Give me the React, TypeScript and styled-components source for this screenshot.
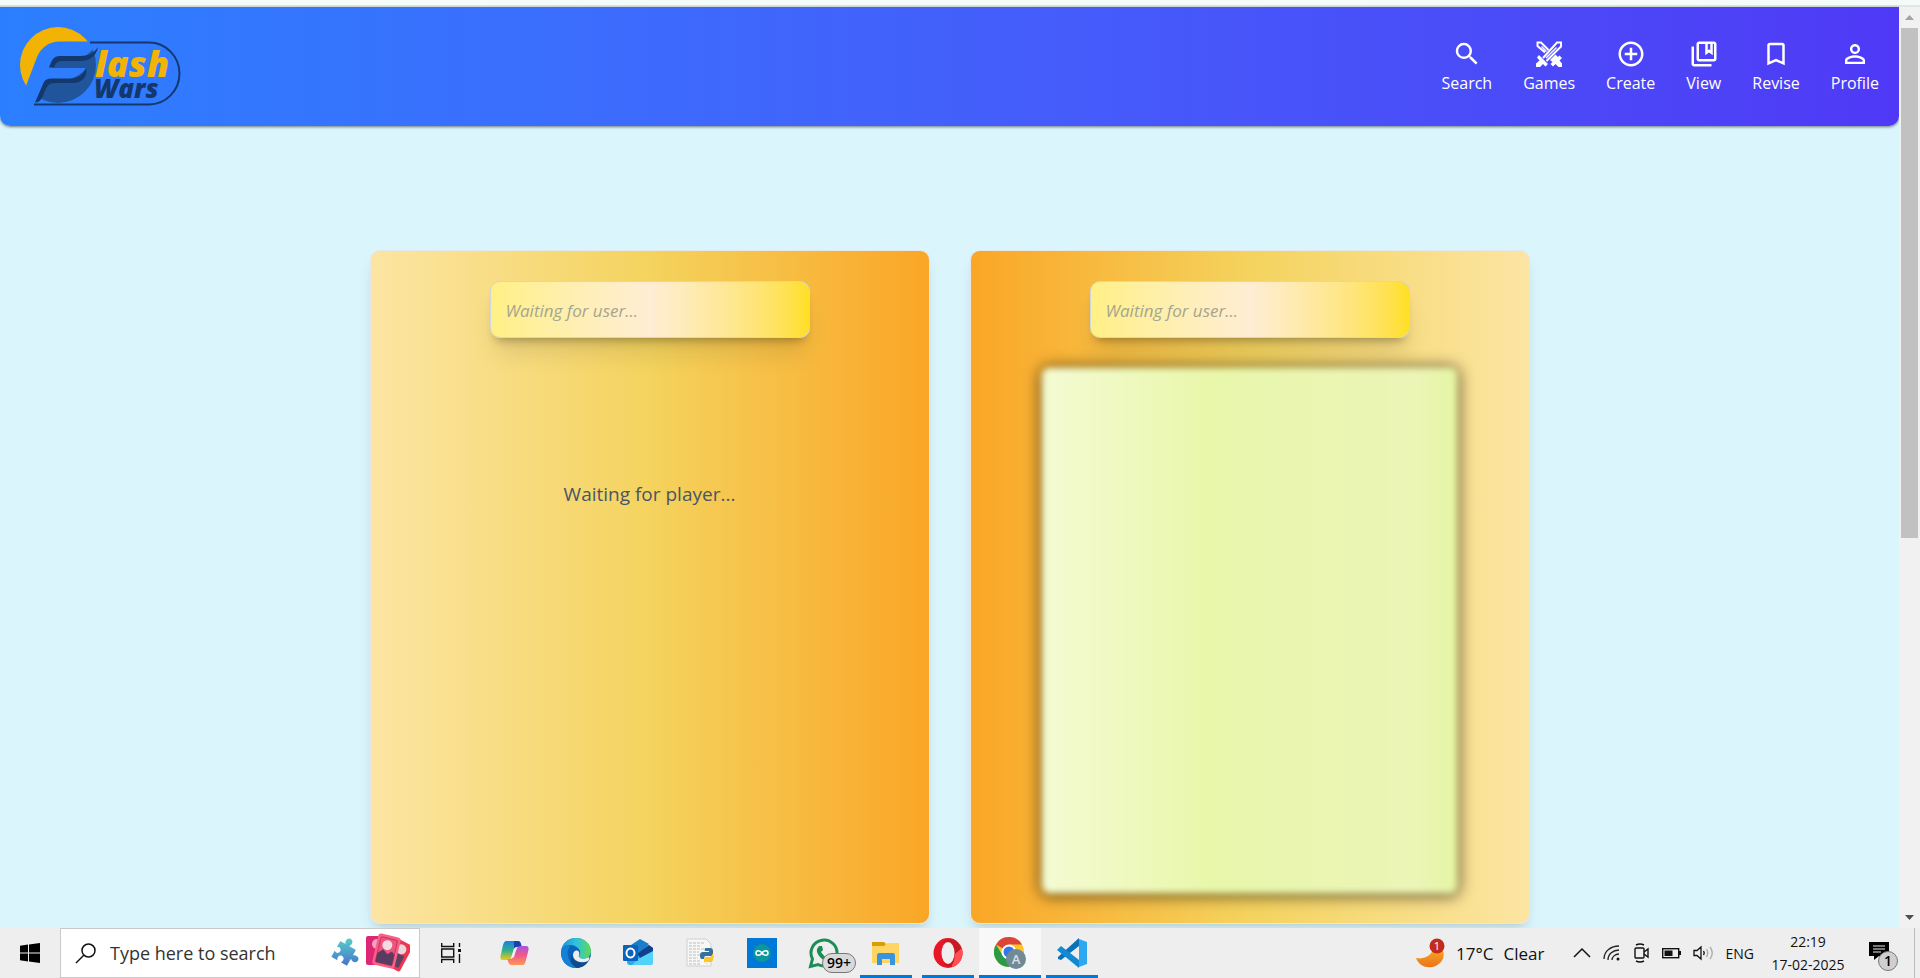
import React from 'react';
import styled, { createGlobalStyle, css } from 'styled-components';
import {
  MdSearch,
  MdAddCircleOutline,
  MdOutlineCollectionsBookmark,
  MdBookmarkBorder,
  MdPersonOutline,
} from 'react-icons/md';

const GlobalStyle = createGlobalStyle`
  *, *::before, *::after { box-sizing: border-box; }
  body {
    margin: 0;
    font-family: "Segoe UI", "Open Sans", "Noto Sans", sans-serif;
    color: #111;
  }
  svg { display: block; flex: none; }
  button { font: inherit; color: inherit; border: 0; padding: 0; background: none; }
`;

const Screen = styled.div`
  display: flex;
  flex-direction: column;
  min-height: 100vh;
`;

const BrowserEdge = styled.div`
  height: 7px;
  background: #f5fbf9;
  border-bottom: 2px solid #dbe8e4;
`;

const Viewport = styled.div`
  flex: 1;
  display: flex;
`;

const Page = styled.div`
  flex: 1;
  min-width: 0;
  background: #dbf5fc;
`;

const Header = styled.header`
  display: flex;
  align-items: center;
  justify-content: space-between;
  height: 119px;
  padding: 0 20px 0 18px;
  border-radius: 0 0 10px 10px;
  background: linear-gradient(to right in oklab, #2b7fff, #4f39f6);
  box-shadow: 0 1px 3px rgba(0, 0, 0, 0.5);
`;

const Nav = styled.nav`
  display: flex;
  gap: 31px;
`;

const NavLink = styled.a`
  display: flex;
  flex-direction: column;
  align-items: center;
  padding-top: 2px;
  color: #fff;
  font-size: 16px;
  line-height: 28px;
  text-decoration: none;
`;

const Arena = styled.main`
  display: flex;
  justify-content: center;
  gap: 40px;
  padding: 124px 20px 4px;
`;

const PlayerCard = styled.section<{ $mirrored?: boolean }>`
  display: flex;
  flex-direction: column;
  align-items: center;
  width: 560px;
  height: 674px;
  padding-top: 30px;
  border: 1px solid #e5e7eb;
  border-radius: 10px;
  background: linear-gradient(
    ${(p) => (p.$mirrored ? 'to left' : 'to right')},
    #fce5a3,
    #f4d35e 50%,
    #faa626
  );
  box-shadow: 0 10px 15px -3px rgba(0, 0, 0, 0.1), 0 4px 6px -4px rgba(0, 0, 0, 0.1);
`;

const NameField = styled.input`
  width: 320px;
  height: 57px;
  padding: 2px 15px 0;
  border: 1px solid #d1d5dc;
  border-radius: 10px;
  background: linear-gradient(to right in oklab, #fff085, #ffedd4 50%, #ffdf20);
  box-shadow: 0 20px 25px -5px rgba(0, 0, 0, 0.1), 0 8px 10px -6px rgba(0, 0, 0, 0.3);
  font: italic 17px "Segoe UI", "Open Sans", "Noto Sans", sans-serif;
  &::placeholder { color: #a5a58f; opacity: 1; }
`;

const WaitingText = styled.p`
  margin: 142px 0 0;
  font-size: 19px;
  line-height: 28px;
  color: #4a5565;
`;

const CardBack = styled.div`
  width: 415px;
  height: 525px;
  margin-top: 30px;
  border-radius: 8px;
  background: linear-gradient(to right, #f4fbd3, #e9f7ab 40%, #ebf5b6 90%, #e5f5a4);
  box-shadow: 0 1px 14px 3px rgba(0, 0, 0, 0.55);
  filter: blur(3px);
`;

const ScrollTrack = styled.div`
  display: flex;
  flex-direction: column;
  width: 21px;
  padding: 0 2px;
  background: #f1f1f1;
`;

const ScrollButton = styled.button`
  display: flex;
  align-items: center;
  justify-content: center;
  height: 21px;
`;

const ScrollLane = styled.div`
  flex: 1;
`;

const ScrollThumb = styled.div`
  height: 58%;
  background: #c1c1c1;
`;

const Taskbar = styled.footer`
  display: flex;
  height: 50px;
  background: #eeeeee;
`;

const AppButtons = styled.nav`
  display: flex;
  padding-left: 1px;
`;

const TaskButton = styled.button<{ $open?: boolean; $active?: boolean; $narrow?: boolean }>`
  display: flex;
  align-items: center;
  justify-content: center;
  width: ${(p) => (p.$narrow ? '60px' : '62px')};
  position: relative;
  ${(p) => p.$active && css`background: #f8f8f8;`}
  ${(p) => p.$open && css`
    &::after {
      content: '';
      position: absolute;
      bottom: 0;
      left: ${p.$active ? '0' : '5px'};
      right: ${p.$active ? '0' : '5px'};
      height: 3px;
      background: #0078d7;
    }
  `}
`;

const SearchBox = styled.label`
  display: flex;
  align-items: center;
  width: 360px;
  padding: 0 9px 0 14px;
  background: #fff;
  border: 1px solid #c9c9c9;
`;

const SearchInput = styled.input`
  flex: 1;
  min-width: 0;
  padding: 0 0 0 14px;
  border: 0;
  background: none;
  font: 18px "Segoe UI", "Open Sans", "Noto Sans", sans-serif;
  &::placeholder { color: #333; opacity: 1; }
`;

const SearchArt = styled.span`
  display: flex;
  align-items: center;
  gap: 4px;
`;

const CountBadge = styled.span`
  position: absolute;
  right: -1px;
  bottom: 5px;
  padding: 0 4px;
  border: 1px solid #777;
  border-radius: 10px;
  background: #d9d9d9;
  font-size: 14px;
  font-weight: 600;
  line-height: 18px;
  color: #000;
`;

const Tray = styled.div`
  display: flex;
  align-items: center;
  margin-left: auto;
`;

const Weather = styled.button`
  display: flex;
  align-items: center;
  gap: 10px;
  margin-right: 28px;
  font-size: 17px;
`;

const TrayIcons = styled.div`
  display: flex;
  align-items: center;
  gap: 12px;
  font-size: 14px;
`;

const Clock = styled.button`
  width: 78px;
  margin: 0 22px 0 15px;
  font-size: 14px;
  line-height: 23px;
`;

const Notifications = styled.button`
  margin-right: 14px;
`;

const ShowDesktop = styled.div`
  align-self: stretch;
  width: 6px;
  border-left: 1px solid #bcbcbc;
`;

const SwordsIcon = ({ size }: { size: number }) => (
  <svg width={size} height={size} viewBox="0 0 30 30">
    <g fill="none" stroke="#fff" strokeWidth="2">
      <path d="M9 19L23 3.500H27V7.500L12.500 22" />
      <path d="M12 19L22.500 8.500" strokeWidth="1.500" />
      <path d="M11 13.500L3.500 7V3.500H7L14.500 11" />
      <path d="M7.500 7.500L12.500 12.500" strokeWidth="1.500" />
    </g>
    <path d="M5 16L14 25L11.500 27.500L9 25L6 28H2V24.500L5.500 21.500L3 18.500Z" fill="#fff" />
    <path d="M18 19L21.500 15.500L24 18L25.500 16.500L28 19L25.500 21.500L28 24.500V28H24.500L21.500 25L19 27.500L16.500 25L18.500 23L16 21Z" fill="#fff" />
  </svg>
);

const navItems = [
  { label: 'Search', Icon: MdSearch },
  { label: 'Games', Icon: SwordsIcon },
  { label: 'Create', Icon: MdAddCircleOutline },
  { label: 'View', Icon: MdOutlineCollectionsBookmark },
  { label: 'Revise', Icon: MdBookmarkBorder },
  { label: 'Profile', Icon: MdPersonOutline },
];

const Logo = () => (
  <svg width="164" height="88" viewBox="18 23 164 88" role="img" aria-label="Flash Wars">
    <defs>
      <clipPath id="disc"><circle cx="58" cy="65" r="38" /></clipPath>
    </defs>
    <path d="M26 86H10V20H92L88 41.500H60C48 41.500 41 48 37 57Z" fill="#f2b305" clipPath="url(#disc)" />
    <path d="M90 42.500H149A30.500 31 0 0 1 149 104.500H34" fill="none" stroke="#14386d" strokeWidth="2" />
    <path d="M99 44V106H34L46 83C60 80 76 82 86 68H52L58 59H82Z" fill="#20559b" clipPath="url(#disc)" />
    <path d="M49 67.500C52 60 53 56 60 56H80C89 56 94 53 98 47C96 57 89 61 80 61H63C57 61 56 63 54 67.500Z" fill="#14386d" />
    <path d="M35 102.500L43 84C45 79 48 78.500 52 78.500H70C79 78 84 74 86 68C88 77 81 83 73 83H54C49 83 47 86 45 91L42 98C40 101 38 102.500 35 102.500Z" fill="#14386d" />
    <text x="95" y="77" fontFamily="Open Sans" fontStyle="italic" fontWeight="800" fontSize="36" fill="#f2b305">lash</text>
    <text x="94" y="98" fontFamily="Open Sans" fontStyle="italic" fontWeight="800" fontSize="26" fill="#14386d">Wars</text>
  </svg>
);

const WindowsIcon = () => (
  <svg width="20" height="20" viewBox="0 0 20 20">
    <path d="M0 2.800L8 1.600V9.500H0ZM9 1.500L20 0V9.500H9ZM0 10.500H8V18.500L0 17.300ZM9 10.500H20V20L9 18.600Z" fill="#000" />
  </svg>
);

const LensIcon = () => (
  <svg width="21" height="21" viewBox="0 0 21 21" fill="none" stroke="#111" strokeWidth="1.500">
    <circle cx="13.500" cy="7.500" r="6.500" />
    <path d="M9 12L1 20" />
  </svg>
);

const PuzzleIcon = () => (
  <svg width="32" height="32" viewBox="0 0 32 32">
    <defs>
      <linearGradient id="puzzle" gradientUnits="userSpaceOnUse" x1="8" y1="2" x2="24" y2="28">
        <stop offset="0" stopColor="#5ad3c6" />
        <stop offset="1" stopColor="#4270cf" />
      </linearGradient>
    </defs>
    <path
      transform="rotate(30 16 16)"
      d="M6 8H12C10 6 10 1 14 1S18 6 16 8H24V14C26 12 31 12 31 16S26 20 24 18V26H17C19 24 18 20 15 20S11 24 13 26H6V19C8 21 11 20 11 17S8 13 6 15Z"
      fill="url(#puzzle)"
    />
  </svg>
);

const PhotoCardsIcon = () => (
  <svg width="45" height="40" viewBox="0 0 45 40">
    <rect x="1" y="3" width="20" height="29" rx="2" fill="#dd2676" />
    <circle cx="12" cy="11" r="5" fill="#f5a3c0" />
    <g transform="rotate(28 34 23)">
      <rect x="24" y="8" width="18" height="29" rx="2" fill="#f0354f" />
      <rect x="27" y="21" width="12" height="13" fill="#5b4163" />
      <circle cx="33" cy="16" r="5" fill="#ead5dc" />
    </g>
    <g transform="rotate(13 21 18)">
      <rect x="10" y="2" width="23" height="32" rx="3" fill="#fb5f84" />
      <rect x="13" y="5" width="17" height="26" rx="2" fill="#ee547c" stroke="#c93263" />
      <path d="M13 22L18 17L23 21L27 17L30 20V31H13Z" fill="#5a3c63" />
      <circle cx="21" cy="12" r="5" fill="#f2dbe1" />
    </g>
  </svg>
);

const TaskViewIcon = () => (
  <svg width="20" height="20" viewBox="0 0 20 20" fill="none" stroke="#111" strokeWidth="1.400">
    <path d="M.7 0V3.500H12.700V0M.7 20V16.500H12.700V20M.7 6H12.700V14H.7ZM18.500 0V4M18.500 11V20" />
    <path d="M17 6H20V9H17Z" fill="#111" stroke="none" />
  </svg>
);

const CopilotIcon = () => (
  <svg width="29" height="26" viewBox="0 0 29 26">
    <defs>
      <linearGradient id="cpLeft" x1="0" y1="0" x2="0" y2="1">
        <stop offset="0" stopColor="#1b80e0" />
        <stop offset=".5" stopColor="#32b08c" />
        <stop offset="1" stopColor="#f2ca17" />
      </linearGradient>
      <linearGradient id="cpRight" x1="0" y1="0" x2="0" y2="1">
        <stop offset="0" stopColor="#a953df" />
        <stop offset=".5" stopColor="#f05a8b" />
        <stop offset="1" stopColor="#ff984f" />
      </linearGradient>
    </defs>
    <path d="M6 1H18C21 1 20 4 22 7H17C14 7 14 9 13 12L11 18C10 20 8 20 6 20H3C0 20 0 17 1 14L3 5C4 2 5 1 6 1Z" fill="url(#cpLeft)" />
    <path d="M14 1H18C21 1 21 5 22 7H17C15 7 14 8 14 9Z" fill="#1642b5" />
    <path d="M23 25H12C8 25 9 22 7 19C12 20 13 17 14 14L17 8C18 6 20 6 22 6H26C29 6 29 9 28 12L26 20C25 24 24 25 23 25Z" fill="url(#cpRight)" />
    <path d="M14 9L17 7L14 17L11 19Z" fill="#f3eef2" />
  </svg>
);

const EdgeIcon = () => (
  <svg width="30" height="30" viewBox="0 0 30 30">
    <defs>
      <linearGradient id="edgeTop" x1="0" x2="1">
        <stop offset="0" stopColor="#1b8ed8" />
        <stop offset=".5" stopColor="#2fc2df" />
        <stop offset="1" stopColor="#5fd953" />
      </linearGradient>
    </defs>
    <circle cx="15" cy="15" r="15" fill="#0c62b8" />
    <path d="M0 14C1 5 7 0 15 0C24 0 30 6 30 13C30 18 26 21 22 21C18 21 17 19 18 18C22 13 16 7 9 7C4 7 1 10 0 14Z" fill="url(#edgeTop)" />
    <path d="M0 14C2 9 6 7 10 7.500C7 10 6 14 7 18C8 24 13 29 17 30C7 31 0 24 0 14Z" fill="#1480d6" />
    <path d="M11 16C11 22 17 27 27 23C24 28 20 30 16 30C11 28 8 22 11 16Z" fill="#114a8b" />
    <path d="M12 17C12 13 16 11 18 14C19 17 17 18 18 19C20 22 25 21 28 19C29 20 28 22 27 23C20 26 12 23 12 17Z" fill="#eeeeee" />
  </svg>
);

const OutlookIcon = () => (
  <svg width="30" height="28" viewBox="0 0 30 28">
    <path d="M4 9L17 1L30 9V23C30 25 29 26 27 26H7C5 26 4 25 4 23Z" fill="#2ea8e8" />
    <path d="M5 8L17 0L26 5L15 15H5Z" fill="#1b7cc7" />
    <path d="M14 15L26 6L30 9V13L18 20Z" fill="#123e8e" />
    <path d="M15 20L30 12V23C30 25 29 26 27 26H9Z" fill="#51d3f9" />
    <rect y="6" width="15" height="16" rx="1" fill="#0a64bd" />
    <ellipse cx="7.500" cy="14" rx="4" ry="4.500" fill="none" stroke="#fff" strokeWidth="2" />
  </svg>
);

const PythonFileIcon = () => (
  <svg width="29" height="30" viewBox="0 0 29 30">
    <path d="M1 1H20L25 6V28H1Z" fill="#f7f7f5" stroke="#d0d0d0" />
    <path d="M3 5H18M3 8H15M3 11H20M3 14H13M3 17H14M3 20H12M3 23H15M3 26H14" stroke="#bdbdbd" strokeDasharray="3 1" />
    <path d="M20 10H24C26 10 27 11 27 13V16C27 18 25 18 23 18H20C18 18 18 20 18 21H16C14 21 14 19 14 17C14 15 15 14 17 14H23V13H19C18 11 19 10 20 10Z" fill="#35709f" />
    <path d="M23 25H19V24H25C28 24 28 16 27 16H26C26 19 25 19 23 19H20C18 19 18 21 18 23C18 25 20 26 23 25Z" fill="#fcc52e" />
  </svg>
);

const ArduinoIcon = () => (
  <svg width="30" height="30" viewBox="0 0 30 30">
    <rect width="30" height="30" fill="#0078d7" />
    <circle cx="15" cy="15" r="9" fill="#0b979c" />
    <path d="M15 15C13 12 9 12 9 15S13 18 15 15C17 12 21 12 21 15S17 18 15 15Z" fill="none" stroke="#fff" strokeWidth="1.500" />
  </svg>
);

const WhatsAppIcon = () => (
  <svg width="32" height="32" viewBox="0 0 32 32">
    <path d="M2.500 29.500L4.500 22A13 13 0 1 1 10 27.500Z" fill="#eee" stroke="#1c8d57" strokeWidth="3" />
    <path d="M11 9L14 9L15 13L13 15C15 18 17 20 20 21L22 19L25 21C24 25 21 26 17 24C12 21 8 16 9 12Z" fill="#1c8d57" />
  </svg>
);

const ExplorerIcon = () => (
  <svg width="28" height="24" viewBox="0 0 28 24">
    <path d="M0 1H12L14 3V6H0Z" fill="#dc9c05" />
    <path d="M0 5H12L15 2H27V22H0Z" fill="#ffd564" />
    <path d="M5 24V14C5 13 6 12 7 12H21C22 12 23 13 23 14V24H18V18H10V24Z" fill="#3a93dd" />
  </svg>
);

const OperaIcon = () => (
  <svg width="30" height="30" viewBox="0 0 30 30">
    <ellipse cx="15" cy="15" rx="14.500" ry="15" fill="#e81627" />
    <path d="M10 5C13 0 20 1 24 4C31 10 31 20 24 26C20 29 13 30 10 25C25 28 25 3 10 5Z" fill="#c71922" />
    <path d="M19 27C22 23 21 20 22 16L29 10C31 18 28 26 19 29Z" fill="#ff4f50" />
    <ellipse cx="15" cy="15" rx="6.500" ry="11" fill="#eeeeee" />
  </svg>
);

const ChromeIcon = () => (
  <svg width="32" height="32" viewBox="0 0 32 32">
    <circle cx="15" cy="15" r="15" fill="#fbc32d" />
    <path d="M15 15L2 7.500A15 15 0 0 1 28 7.500H15Z" fill="#dc4437" />
    <path d="M15 15L15 30A15 15 0 0 1 2 7.500L9 19Z" fill="#2a9c48" />
    <circle cx="15" cy="15" r="7.500" fill="#fff" />
    <circle cx="15" cy="15" r="5.500" fill="#3478e5" />
    <circle cx="22" cy="22" r="10" fill="#728a96" />
    <text x="22" y="27" textAnchor="middle" fontFamily="Open Sans" fontSize="13" fontWeight="600" fill="#d9e1e5">A</text>
  </svg>
);

const VsCodeIcon = () => (
  <svg width="30" height="30" viewBox="0 0 30 30">
    <path d="M22 1L30 4V26L22 29Z" fill="#2da8f0" />
    <path d="M1 19L22 0V8L4 22L1 21Z" fill="#0b71b8" />
    <path d="M1 11L4 8L22 22V30L0 12Z" fill="#118ad2" />
  </svg>
);

const MoonIcon = () => (
  <svg width="30" height="30" viewBox="0 0 30 30">
    <defs>
      <linearGradient id="moon" x1="0" y1="0" x2="0" y2="1">
        <stop offset="0" stopColor="#f8b72d" />
        <stop offset="1" stopColor="#ec7417" />
      </linearGradient>
    </defs>
    <path d="M0 20C10 22 18 16 19 5C28 9 30 18 25 24C18 32 4 31 0 20Z" fill="url(#moon)" />
    <circle cx="21" cy="8" r="7.500" fill="#c42b1c" />
    <text x="21" y="12" textAnchor="middle" fontFamily="Open Sans" fontSize="11" fill="#fff">1</text>
  </svg>
);

const ChevronIcon = () => (
  <svg width="18" height="20" viewBox="0 0 18 20" fill="none" stroke="#111" strokeWidth="1.500">
    <path d="M1 14L9 6L17 14" />
  </svg>
);

const WifiIcon = () => (
  <svg width="18" height="20" viewBox="0 0 18 20" fill="none" stroke="#222" strokeWidth="1.300">
    <path d="M1 16C1 8 8 3 16 3M5 17C5 11 10 7 16 7M9 17C9 14 12 11 16 11" />
    <circle cx="15" cy="16" r="1.500" fill="#111" stroke="none" />
  </svg>
);

const MeetIcon = () => (
  <svg width="17" height="20" viewBox="0 0 17 20" fill="none" stroke="#111" strokeWidth="1.400">
    <rect x="2" y="5" width="9" height="10" rx="1" />
    <path d="M11 9L15 6V14L11 11M3 2Q7 0 11 2M3 18Q7 20 11 18" />
  </svg>
);

const BatteryIcon = () => (
  <svg width="19" height="20" viewBox="0 0 19 20">
    <rect x=".7" y="5.700" width="16" height="9" fill="none" stroke="#111" strokeWidth="1.400" />
    <path d="M2.500 7.500H10.500V13H2.500ZM17 8H19V12H17Z" fill="#111" />
  </svg>
);

const VolumeIcon = () => (
  <svg width="21" height="20" viewBox="0 0 21 20" fill="none" stroke="#111" strokeWidth="1.300">
    <path d="M1 7.500H4L8 4V16L4 12.500H1ZM10.500 8Q12 10 10.500 12" />
    <path d="M13.500 6Q16 10 13.500 14M17 4Q21.500 10 17 16" stroke="#aaa" />
  </svg>
);

const MessageIcon = () => (
  <svg width="31" height="38" viewBox="0 0 31 38">
    <path d="M0 8H20V22H10L5 26V22H0Z" fill="#000" />
    <path d="M4 12H16M4 15H16M4 18H12" stroke="#eee" />
    <circle cx="19" cy="27" r="9.500" fill="#cfcfcf" stroke="#777" />
    <text x="19" y="32" textAnchor="middle" fontFamily="Open Sans" fontSize="14" fontWeight="600">1</text>
  </svg>
);

const apps = [
  { name: 'Copilot', Icon: CopilotIcon },
  { name: 'Edge', Icon: EdgeIcon },
  { name: 'Outlook', Icon: OutlookIcon },
  { name: 'Python', Icon: PythonFileIcon },
  { name: 'Arduino', Icon: ArduinoIcon },
  { name: 'WhatsApp', Icon: WhatsAppIcon, badge: '99+' },
  { name: 'File Explorer', Icon: ExplorerIcon, open: true },
  { name: 'Opera', Icon: OperaIcon, open: true },
  { name: 'Chrome', Icon: ChromeIcon, open: true, active: true },
  { name: 'Visual Studio Code', Icon: VsCodeIcon, open: true },
];

export default function App() {
  return (
    <Screen>
      <GlobalStyle />
      <BrowserEdge />
      <Viewport>
        <Page>
          <Header>
            <Logo />
            <Nav>
              {navItems.map(({ label, Icon }) => (
                <NavLink href="#" key={label}>
                  <Icon size={30} />
                  {label}
                </NavLink>
              ))}
            </Nav>
          </Header>
          <Arena>
            <PlayerCard>
              <NameField aria-label="First player" placeholder="Waiting for user..." readOnly />
              <WaitingText>Waiting for player...</WaitingText>
            </PlayerCard>
            <PlayerCard $mirrored>
              <NameField aria-label="Second player" placeholder="Waiting for user..." readOnly />
              <CardBack />
            </PlayerCard>
          </Arena>
        </Page>
        <ScrollTrack>
          <ScrollButton aria-label="Scroll up">
            <svg width="9" height="5" viewBox="0 0 9 5"><path d="M0 5L4.500 0L9 5Z" fill="#a3a3a3" /></svg>
          </ScrollButton>
          <ScrollLane>
            <ScrollThumb />
          </ScrollLane>
          <ScrollButton aria-label="Scroll down">
            <svg width="9" height="5" viewBox="0 0 9 5"><path d="M0 0L4.500 5L9 0Z" fill="#505050" /></svg>
          </ScrollButton>
        </ScrollTrack>
      </Viewport>
      <Taskbar>
        <TaskButton aria-label="Start" $narrow><WindowsIcon /></TaskButton>
        <SearchBox>
          <LensIcon />
          <SearchInput aria-label="Search" placeholder="Type here to search" />
          <SearchArt>
            <PuzzleIcon />
            <PhotoCardsIcon />
          </SearchArt>
        </SearchBox>
        <TaskButton aria-label="Task view"><TaskViewIcon /></TaskButton>
        <AppButtons aria-label="Apps">
          {apps.map(({ name, Icon, badge, open, active }) => (
            <TaskButton key={name} aria-label={name} $open={open} $active={active}>
              <Icon />
              {badge && <CountBadge>{badge}</CountBadge>}
            </TaskButton>
          ))}
        </AppButtons>
        <Tray>
          <Weather>
            <MoonIcon />
            <span>17°C</span>
            <span>Clear</span>
          </Weather>
          <TrayIcons>
            <ChevronIcon />
            <WifiIcon />
            <MeetIcon />
            <BatteryIcon />
            <VolumeIcon />
            <span>ENG</span>
          </TrayIcons>
          <Clock>22:19<br />17-02-2025</Clock>
          <Notifications aria-label="Notifications"><MessageIcon /></Notifications>
          <ShowDesktop />
        </Tray>
      </Taskbar>
    </Screen>
  );
}
